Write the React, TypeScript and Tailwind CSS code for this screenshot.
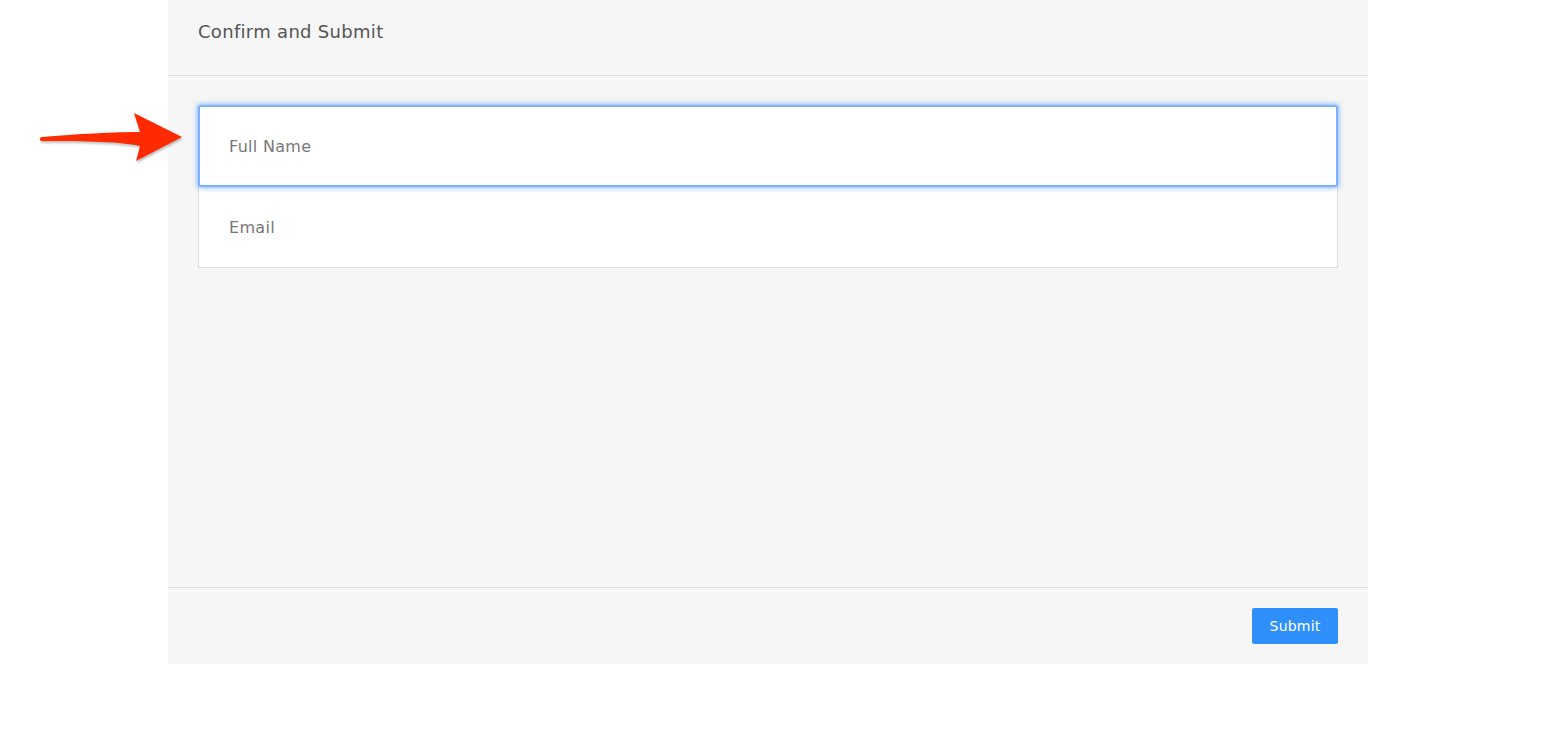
import React from "react";

const font = { fontFamily: '"DejaVu Sans", "Open Sans", sans-serif' };

function Arrow() {
  return (
    <svg
      className="absolute left-[36px] top-[110px] drop-shadow-[1px_2px_1px_rgba(0,0,0,0.25)]"
      width="150"
      height="56"
      viewBox="0 0 150 56"
    >
      <path
        d="M6 27 C 40 24, 80 22, 104 22 L 98 3 L 146 27 L 100 51 L 104 36 C 80 31, 40 31, 6 31 C 3 31, 3 27, 6 27 Z"
        fill="#ff2a00"
      />
    </svg>
  );
}

export default function App() {
  return (
    <div className="relative min-h-[748px] bg-white" style={font}>
      <Arrow />
      <div className="ml-[168px] w-[1200px] h-[664px] bg-[#f6f6f6] flex flex-col">
        {/* Header */}
        <div className="h-[76px] border-b border-[#dcdcdc] px-[30px] flex items-center pb-[12px]">
          <h2 className="text-[18px] text-[#555] font-normal tracking-[0.3px]">Confirm and Submit</h2>
        </div>

        {/* Body */}
        <div className="flex-1 px-[30px] pt-[29px]">
          <div className="flex flex-col">
            <div className="h-[82px] bg-white border-2 border-[#7ab2fb] rounded-[3px] shadow-[0_0_5px_1px_rgba(90,155,255,0.7)] flex items-center pl-[29px] pt-[1px] relative z-10">
              <span className="text-[16px] text-[#777] tracking-[0.3px]">Full Name</span>
            </div>
            <div className="h-[82px] -mt-px bg-white border border-[#dcdcdc] border-t-0 flex items-center pl-[30px] pt-[2px]">
              <span className="text-[16px] text-[#777] tracking-[0.3px]">Email</span>
            </div>
          </div>
        </div>

        {/* Footer */}
        <div className="h-[77px] border-t border-[#dcdcdc] px-[30px] flex items-center justify-end">
          <button className="w-[86px] h-[36px] bg-[#2f8ffb] rounded-[2px] text-white text-[14px] tracking-[0.2px]">
            Submit
          </button>
        </div>
      </div>
    </div>
  );
}
